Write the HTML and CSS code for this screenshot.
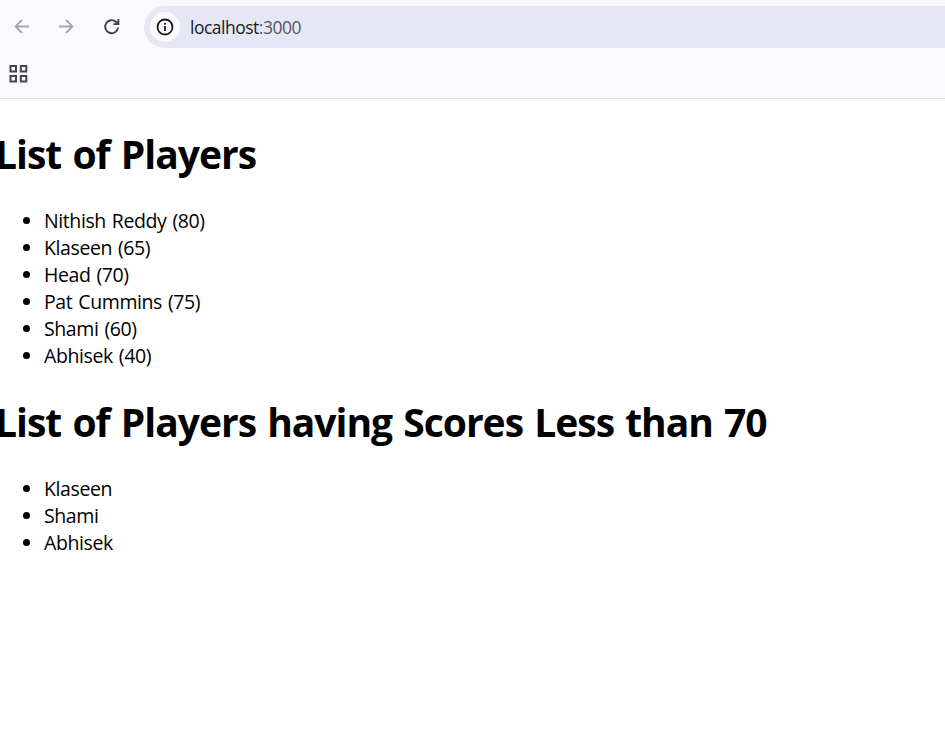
FILE: index.html
```html
<!DOCTYPE html>
<html lang="en">
<head>
<meta charset="utf-8">
<title>List of Players</title>
<link rel="stylesheet" href="styles.css">
</head>
<body>
<header class="browser">
  <div class="toolbar">
    <svg class="icon nav back" viewBox="0 0 18 18"><path d="M16 8.500H2.500M9 2 2.500 8.500 9 15"/></svg>
    <svg class="icon nav forward" viewBox="0 0 18 18"><path d="M1 8.500h13.500M8 2 14.500 8.500 8 15"/></svg>
    <svg class="icon reload" viewBox="0 0 18 18"><path d="M15.100 9.500A6.500 6.500 0 1 1 13.200 4L15.100 6M15.400 1V6.100H10.300"/></svg>
    <div class="address">
      <span class="site-info"><svg class="icon info" viewBox="0 0 18 18"><circle cx="9" cy="9" r="7.500"/><path d="M9 8v5M9 5v1.800"/></svg></span>
      <span class="url">localhost<span class="port">:3000</span></span>
    </div>
  </div>
  <div class="bookmarks">
    <svg class="icon apps" viewBox="0 0 20 20"><path d="M2.500 2H8v5.500H2.500zM12.800 2h5.500v5.500h-5.500zM2.500 12H8v5.500H2.500zM12.800 12h5.500v5.500h-5.500z"/></svg>
  </div>
</header>
<main class="page">
  <h1 class="title">List of Players</h1>
  <ul class="players">
    <li>Nithish Reddy (80)</li>
    <li>Klaseen (65)</li>
    <li>Head (70)</li>
    <li>Pat Cummins (75)</li>
    <li>Shami (60)</li>
    <li>Abhisek (40)</li>
  </ul>
  <h1 class="title">List of Players having Scores Less than 70</h1>
  <ul class="players">
    <li>Klaseen</li>
    <li>Shami</li>
    <li>Abhisek</li>
  </ul>
</main>
</body>
</html>
```
FILE: styles.css
```css
* { box-sizing: border-box; }
body { margin: 0; background: #fff; color: #000; font-family: "Segoe UI", "Open Sans", sans-serif; overflow: hidden; }
.browser { height: 99px; background: #f9f9ff; border-bottom: 1px solid #dfe1ec; }
.toolbar { display: flex; align-items: center; height: 54px; padding-left: 13px; }
.icon { display: block; flex: none; width: 18px; height: 18px; fill: none; stroke: #45464f; stroke-width: 1.8; }
.nav { stroke: #a5a5ab; stroke-width: 1.8; }
.forward { margin-left: 27px; }
.reload { margin-left: 27px; stroke: #38414f; stroke-width: 1.9; }
.address { display: flex; align-items: center; flex: 1; height: 42px; margin-left: 23px; padding-left: 6px; border-radius: 21px 0 0 21px; background: #e5e8f4; }
.site-info { display: flex; align-items: center; justify-content: center; width: 30px; height: 30px; border-radius: 50%; background: #fafaff; }
.info { stroke: #1b1b1f; }
.url { margin-left: 10px; font-size: 17.5px; letter-spacing: -0.5px; color: #1b1b1f; }
.port { color: #55565e; }
.bookmarks { display: flex; align-items: center; height: 40px; padding-left: 8px; }
.apps { width: 20px; height: 20px; stroke-width: 2; }
.page { padding-top: 28px; }
.title { margin: 0 0 0 -5px; font-size: 39px; line-height: 54px; font-weight: 700; letter-spacing: -1px; word-spacing: 2px; white-space: nowrap; }
.players { margin: 26px 0; padding-left: 44px; font-size: 19.5px; line-height: 27px; letter-spacing: -0.4px; word-spacing: 1.3px; }
```
